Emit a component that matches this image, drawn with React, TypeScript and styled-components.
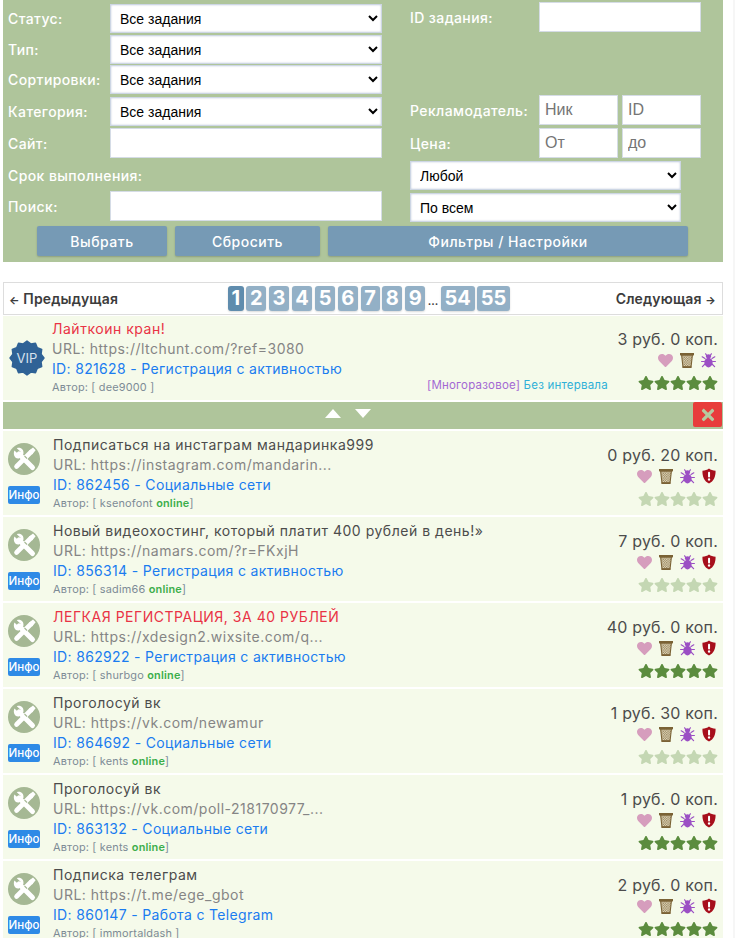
import React from "react";
import styled, { createGlobalStyle } from "styled-components";
import { FaHeart, FaStar, FaTimes } from "react-icons/fa";

const GlobalStyle = createGlobalStyle`
  html, body {
    margin: 0;
    padding: 0;
    background: #ffffff;
    font-family: Inter, "Noto Sans", sans-serif;
  }
  * {
    box-sizing: border-box;
  }
`;

type Task = {
  title: string;
  url: string;
  id: string;
  category: string;
  author: string;
  online?: boolean;
  price: string;
  accent?: boolean;
  dimStars?: boolean;
};

const tasks: Task[] = [
  {
    title: "Подписаться на инстаграм мандаринка999",
    url: "https://instagram.com/mandarin...",
    id: "862456",
    category: "Социальные сети",
    author: "ksenofont",
    online: true,
    price: "0 руб. 20 коп.",
    dimStars: true,
  },
  {
    title: "Новый видеохостинг, который платит 400 рублей в день!»",
    url: "https://namars.com/?r=FKxjH",
    id: "856314",
    category: "Регистрация с активностью",
    author: "sadim66",
    online: true,
    price: "7 руб. 0 коп.",
    dimStars: true,
  },
  {
    title: "ЛЕГКАЯ РЕГИСТРАЦИЯ, ЗА 40 РУБЛЕЙ",
    url: "https://xdesign2.wixsite.com/q...",
    id: "862922",
    category: "Регистрация с активностью",
    author: "shurbgo",
    online: true,
    price: "40 руб. 0 коп.",
    accent: true,
  },
  {
    title: "Проголосуй вк",
    url: "https://vk.com/newamur",
    id: "864692",
    category: "Социальные сети",
    author: "kents",
    online: true,
    price: "1 руб. 30 коп.",
    dimStars: true,
  },
  {
    title: "Проголосуй вк",
    url: "https://vk.com/poll-218170977_...",
    id: "863132",
    category: "Социальные сети",
    author: "kents",
    online: true,
    price: "1 руб. 0 коп.",
  },
  {
    title: "Подписка телеграм",
    url: "https://t.me/ege_gbot",
    id: "860147",
    category: "Работа с Telegram",
    author: "immortaldash",
    price: "2 руб. 0 коп.",
  },
];

const pages = ["1", "2", "3", "4", "5", "6", "7", "8", "9"];

function Basket() {
  return (
    <svg width="14" height="15" viewBox="0 0 14 15">
      <defs>
        <pattern id="mesh" width="2.4" height="2.4" patternUnits="userSpaceOnUse">
          <rect width="2.4" height="2.4" fill="#e9e3cc" />
          <rect width="1.2" height="1.2" fill="#8f7a4d" />
          <rect x="1.2" y="1.2" width="1.2" height="1.2" fill="#8f7a4d" />
        </pattern>
      </defs>
      <path d="M1.6 2 L3 14.2 H11 L12.4 2 Z" fill="url(#mesh)" stroke="#7a6235" strokeWidth="1.1" />
      <rect x="0" y="0" width="14" height="2.4" fill="#7a6235" />
      <rect x="2.6" y="13.2" width="8.8" height="1.8" fill="#7a6235" />
    </svg>
  );
}

function Bug() {
  return (
    <svg width="15" height="15" viewBox="0 0 15 15">
      <g stroke="#9b4fc4" strokeWidth="1.2" fill="none" strokeLinecap="round">
        <path d="M4 5.5 L1.2 3.8 M11 5.5 L13.8 3.8" />
        <path d="M3.4 8.5 L0.6 8.5 M11.6 8.5 L14.4 8.5" />
        <path d="M4 11 L1.4 13.6 M11 11 L13.6 13.6" />
        <path d="M5.6 2.4 L4.6 0.8 M9.4 2.4 L10.4 0.8" />
      </g>
      <ellipse cx="7.5" cy="3.4" rx="2.6" ry="2.1" fill="#9b4fc4" />
      <path d="M7.5 5 C10.6 5 11.8 7.6 11.6 9.8 C11.4 12.6 9.4 14.4 7.5 14.4 C5.6 14.4 3.6 12.6 3.4 9.8 C3.2 7.6 4.4 5 7.5 5 Z" fill="#9b4fc4" />
    </svg>
  );
}

function Shield() {
  return (
    <svg width="14" height="16" viewBox="0 0 16 17" preserveAspectRatio="none">
      <path
        d="M8 0.5 C10 2 12.5 2.6 15.5 2.8 C15.7 9 13.5 13.8 8 16.5 C2.5 13.8 0.3 9 0.5 2.8 C3.5 2.6 6 2 8 0.5 Z"
        fill="#a70f1c"
      />
      <rect x="6.9" y="4" width="2.3" height="6" rx="1" fill="#ffffff" />
      <circle cx="8.05" cy="12.2" r="1.3" fill="#ffffff" />
    </svg>
  );
}

function Tools() {
  return (
    <svg width="32" height="32" viewBox="0 0 32 32">
      <circle cx="16" cy="16" r="16" fill="#a5b894" />
      {/* spanner, lower right handle */}
      <path d="M11 11 L24.5 24.5" stroke="#ffffff" strokeWidth="5" strokeLinecap="round" />
      <path
        d="M6.4 7.6 L10.2 11 L12.6 8.8 L8.8 5.2 C12.6 3.8 16.2 6.6 15.4 11 L11 15.4 C6.6 16.2 4.8 11.6 6.4 7.6 Z"
        fill="#ffffff"
      />
      {/* screwdriver, lower left handle */}
      <path d="M23 9 L8.5 23.5" stroke="#ffffff" strokeWidth="4.6" strokeLinecap="round" />
      <path d="M21 7.8 L25 4.6 L27.6 7.2 L24.4 11.2 L21.6 11 Z" fill="#ffffff" />
      <path d="M16.5 13 L19 15.5" stroke="#a5b894" strokeWidth="1.1" />
    </svg>
  );
}

function VipBadge() {
  const points = Array.from({ length: 24 }, (_, i) => {
    const r = i % 2 === 0 ? 17 : 14.6;
    const a = (i * Math.PI) / 12;
    return `${18 + r * Math.cos(a)},${18 + r * Math.sin(a)}`;
  }).join(" ");
  return (
    <BadgeWrap>
      <svg width="36" height="36" viewBox="0 0 36 36">
        <polygon points={points} fill="#2f6296" stroke="#2f6296" strokeWidth="1.4" strokeLinejoin="round" />
      </svg>
      <BadgeText>VIP</BadgeText>
    </BadgeWrap>
  );
}

function Rating({ dim }: { dim?: boolean }) {
  return (
    <Stars $dim={dim}>
      {[0, 1, 2, 3, 4].map((i) => (
        <FaStar key={i} size={16} />
      ))}
    </Stars>
  );
}

function Price({ value, withShield }: { value: string; withShield: boolean }) {
  return (
    <PriceCol>
      <PriceText>{value}</PriceText>
      <Icons>
        <FaHeart size={15} color="#d69dbd" />
        <Basket />
        <Bug />
        {withShield && <Shield />}
      </Icons>
    </PriceCol>
  );
}

export default function App() {
  return (
    <>
      <GlobalStyle />
      <Page>
        <Filters>
          <FilterColumns>
            <LeftCol>
              <FieldRow $h={29} $mt={4}>
                <Label>Статус:</Label>
                <WideSelect><option>Все задания</option></WideSelect>
              </FieldRow>
              <FieldRow $h={29} $mt={2}>
                <Label>Тип:</Label>
                <WideSelect><option>Все задания</option></WideSelect>
              </FieldRow>
              <FieldRow $h={29} $mt={1}>
                <Label>Сортировки:</Label>
                <WideSelect><option>Все задания</option></WideSelect>
              </FieldRow>
              <FieldRow $h={29} $mt={3}>
                <Label>Категория:</Label>
                <WideSelect><option>Все задания</option></WideSelect>
              </FieldRow>
              <FieldRow $h={30} $mt={2}>
                <Label>Сайт:</Label>
                <WideInput />
              </FieldRow>
              <FieldRow $h={30} $mt={2}>
                <Label>Срок выполнения:</Label>
              </FieldRow>
              <FieldRow $h={30} $mt={1}>
                <Label>Поиск:</Label>
                <WideInput />
              </FieldRow>
            </LeftCol>
            <RightCol>
              <FieldRow $h={30} $mt={2}>
                <RightLabel>ID задания:</RightLabel>
                <IdInput />
              </FieldRow>
              <FieldRow $h={30} $mt={63}>
                <RightLabel>Рекламодатель:</RightLabel>
                <PairInputs>
                  <HalfInput placeholder="Ник" />
                  <HalfInput placeholder="ID" />
                </PairInputs>
              </FieldRow>
              <FieldRow $h={30} $mt={3}>
                <RightLabel>Цена:</RightLabel>
                <PairInputs>
                  <HalfInput placeholder="От" />
                  <HalfInput placeholder="до" />
                </PairInputs>
              </FieldRow>
              <RightSelect $mt={3}><option>Любой</option></RightSelect>
              <RightSelect $mt={3}><option>По всем</option></RightSelect>
            </RightCol>
          </FilterColumns>
          <ButtonRow>
            <ActionButton $w={130}>Выбрать</ActionButton>
            <ActionButton $w={145}>Сбросить</ActionButton>
            <ActionButton $w={360}>Фильтры / Настройки</ActionButton>
          </ButtonRow>
        </Filters>

        <Pager>
          <PagerLink>
            <b>←</b> Предыдущая
          </PagerLink>
          <PageList>
            {pages.map((p, i) => (
              <PageBtn key={p} $active={i === 0}>{p}</PageBtn>
            ))}
            <Dots>...</Dots>
            <PageBtn>54</PageBtn>
            <PageBtn>55</PageBtn>
          </PageList>
          <PagerLink>
            Следующая <b>→</b>
          </PagerLink>
        </Pager>

        <VipRow>
          <VipLeft>
            <VipBadge />
          </VipLeft>
          <Body $top={3}>
            <Title $accent>Лайткоин кран!</Title>
            <Url>URL: https://ltchunt.com/?ref=3080</Url>
            <IdLine>ID: 821628 - Регистрация с активностью</IdLine>
            <Author>Автор: [ dee9000 ]</Author>
          </Body>
          <VipTags>
            <Reuse>[Многоразовое]</Reuse> <NoGap>Без интервала</NoGap>
          </VipTags>
          <RightBlock $top={13}>
            <Price value="3 руб. 0 коп." withShield={false} />
            <Rating />
          </RightBlock>
        </VipRow>

        <SortBar>
          <Arrows>
            <ArrowUp />
            <ArrowDown />
          </Arrows>
          <CloseBtn>
            <FaTimes size={18} color="#b5c9a0" />
          </CloseBtn>
        </SortBar>

        <TaskList>
          {tasks.map((t) => (
            <TaskRow key={t.id}>
              <ToolCol>
                <Tools />
                <InfoBtn>Инфо</InfoBtn>
              </ToolCol>
              <Body $top={4}>
                <Title $accent={t.accent}>{t.title}</Title>
                <Url>URL: {t.url}</Url>
                <IdLine>
                  ID: {t.id} - {t.category}
                </IdLine>
                <Author>
                  Автор: [ {t.author}
                  {t.online ? (
                    <>
                      {" "}
                      <Online>online</Online>]
                    </>
                  ) : (
                    " ]"
                  )}
                </Author>
              </Body>
              <RightBlock $top={14}>
                <Price value={t.price} withShield />
                <Rating dim={t.dimStars} />
              </RightBlock>
            </TaskRow>
          ))}
        </TaskList>
      </Page>
    </>
  );
}

const Page = styled.div`
  width: 735px;
  height: 938px;
  overflow: hidden;
  padding: 0 10px 0 3px;
  border-right: 2px solid #f6f6f6;
`;

const Filters = styled.div`
  height: 262px;
  background: #afc59b;
  padding-left: 5px;
`;

const FilterColumns = styled.div`
  display: flex;
  height: 226px;
`;

const LeftCol = styled.div`
  width: 402px;
`;

const RightCol = styled.div`
  width: 291px;
`;

const FieldRow = styled.div<{ $h: number; $mt: number }>`
  display: flex;
  align-items: center;
  height: ${(p) => p.$h}px;
  margin-top: ${(p) => p.$mt}px;
`;

const Label = styled.label`
  width: 102px;
  flex: none;
  white-space: nowrap;
  color: #ffffff;
  font-size: 14px;
  font-weight: 500;
  letter-spacing: 0.4px;
`;

const RightLabel = styled(Label)`
  width: 129px;
  padding-top: 1px;
`;

const selectBase = `
  height: 29px;
  background: #ffffff;
  border: 1px solid #cdd6e4;
  border-radius: 0;
  box-shadow: inset 0 0 2px #b9c4da;
  font-family: "Liberation Sans", Arial, sans-serif;
  font-size: 14px;
  color: #000000;
  padding: 0 5px;
`;

const WideSelect = styled.select`
  ${selectBase}
  width: 272px;
`;

const RightSelect = styled.select<{ $mt: number }>`
  ${selectBase}
  display: block;
  width: 271px;
  margin-top: ${(p) => p.$mt}px;
`;

const inputBase = `
  height: 30px;
  background: #ffffff;
  border: 1px solid #d5dce6;
  font-family: "Liberation Sans", Arial, sans-serif;
  font-size: 16px;
  padding: 0 5px;
  outline: none;
  &::placeholder {
    color: #757575;
  }
`;

const WideInput = styled.input`
  ${inputBase}
  width: 272px;
`;

const IdInput = styled.input`
  ${inputBase}
  width: 162px;
`;

const PairInputs = styled.div`
  display: flex;
  gap: 4px;
`;

const HalfInput = styled.input`
  ${inputBase}
  width: 79px;
`;

const ButtonRow = styled.div`
  display: flex;
  gap: 8px;
  padding-left: 29px;
`;

const ActionButton = styled.button<{ $w: number }>`
  width: ${(p) => p.$w}px;
  height: 30px;
  background: #769ab5;
  border: none;
  border-radius: 2px;
  box-shadow: 0 1px 2px rgba(0, 0, 0, 0.2);
  color: #ffffff;
  font-family: Inter, sans-serif;
  font-size: 14px;
  font-weight: 500;
  letter-spacing: 0.5px;
  padding: 0;
`;

const Pager = styled.div`
  display: flex;
  align-items: center;
  justify-content: space-between;
  height: 33px;
  margin-top: 20px;
  padding: 0 6px 0 5px;
  border: 1px solid #dddddd;
  background: #ffffff;
`;

const PagerLink = styled.span`
  color: #3c3c3c;
  font-size: 14px;
  font-weight: 600;
  letter-spacing: 0.15px;
  b {
    font-size: 11px;
    font-weight: 700;
  }
`;

const PageList = styled.div`
  display: flex;
  align-items: center;
  gap: 2.5px;
  margin-left: 4px;
`;

const PageBtn = styled.span<{ $active?: boolean }>`
  display: block;
  height: 25px;
  padding: 0 3.7px;
  background: ${(p) => (p.$active ? "#5f8cad" : "#93b0c6")};
  border-radius: 3px;
  box-shadow: 0 1px 2px rgba(0, 0, 0, 0.15);
  color: #ffffff;
  font-size: 20px;
  font-weight: 700;
  line-height: 25px;
  text-align: center;
`;

const Dots = styled.span`
  color: #3c3c3c;
  font-size: 11px;
  font-weight: 600;
  align-self: flex-end;
  margin-bottom: 3px;
`;

const VipRow = styled.div`
  display: flex;
  height: 84px;
  margin-top: 1px;
  background: #f5faea;
  position: relative;
`;

const VipLeft = styled.div`
  width: 49px;
  flex: none;
  display: flex;
  align-items: center;
  padding-left: 6px;
`;

const BadgeWrap = styled.div`
  position: relative;
  width: 36px;
  height: 36px;
`;

const BadgeText = styled.span`
  position: absolute;
  inset: 0;
  text-align: center;
  line-height: 36px;
  color: #d7e3ee;
  font-size: 13px;
`;

const Body = styled.div<{ $top: number }>`
  flex: 1;
  min-width: 0;
  padding-top: ${(p) => p.$top}px;
`;

const Title = styled.div<{ $accent?: boolean }>`
  height: 19px;
  line-height: 19px;
  white-space: nowrap;
  color: ${(p) => (p.$accent ? "#e93345" : "#4c4c4c")};
  font-size: 14px;
  letter-spacing: 0.52px;
`;

const Url = styled.div`
  height: 20px;
  line-height: 20px;
  margin-top: 1px;
  color: #858585;
  font-size: 14px;
  letter-spacing: 0.5px;
`;

const IdLine = styled.div`
  height: 20px;
  line-height: 20px;
  color: #1a7cf0;
  font-size: 14px;
  letter-spacing: 0.33px;
`;

const Author = styled.div`
  height: 16px;
  line-height: 16px;
  color: #7d8b96;
  font-size: 10.9px;
  letter-spacing: 0.2px;
`;

const Online = styled.b`
  color: #3cae4a;
  font-weight: 600;
`;

const VipTags = styled.div`
  position: absolute;
  left: 424px;
  bottom: 8px;
  font-size: 11.5px;
  letter-spacing: 0.2px;
`;

const Reuse = styled.span`
  color: #a368d3;
`;

const NoGap = styled.span`
  color: #2fb0d8;
`;

const RightBlock = styled.div<{ $top: number }>`
  width: 130px;
  flex: none;
  padding: ${(p) => p.$top}px 5px 0 0;
  display: flex;
  flex-direction: column;
  align-items: flex-end;
`;

const PriceCol = styled.div`
  display: flex;
  flex-direction: column;
  align-items: flex-end;
`;

const PriceText = styled.div`
  color: #4c4c4c;
  font-size: 16px;
  line-height: 20px;
  white-space: nowrap;
  letter-spacing: 0.2px;
`;

const Icons = styled.div`
  display: flex;
  align-items: center;
  gap: 7px;
  height: 18px;
  margin-top: 2px;
  padding-right: 2px;
`;

const Stars = styled.div<{ $dim?: boolean }>`
  display: flex;
  color: ${(p) => (p.$dim ? "#c4d7b3" : "#5b8c3e")};
  margin-top: 6px;
`;

const SortBar = styled.div`
  display: flex;
  align-items: flex-start;
  height: 27px;
  margin-top: 2px;
  background: #afc59b;
  position: relative;
`;

const Arrows = styled.div`
  display: flex;
  align-items: center;
  gap: 14px;
  margin: 7px 0 0 322px;
`;

const ArrowUp = styled.span`
  width: 0;
  height: 0;
  border-left: 8px solid transparent;
  border-right: 8px solid transparent;
  border-bottom: 9px solid #ffffff;
`;

const ArrowDown = styled(ArrowUp)`
  border-bottom: none;
  border-top: 9px solid #ffffff;
`;

const CloseBtn = styled.span`
  position: absolute;
  right: 1px;
  top: 0;
  width: 29px;
  height: 25px;
  background: #e83c3c;
  border-radius: 2px;
  display: flex;
  align-items: center;
  justify-content: center;
`;

const TaskList = styled.div`
  display: flex;
  flex-direction: column;
  gap: 2px;
  margin-top: 2px;
`;

const TaskRow = styled.div`
  display: flex;
  height: 84px;
  background: #f5faea;
`;

const ToolCol = styled.div`
  width: 50px;
  flex: none;
  padding: 12px 0 0 5px;
  display: flex;
  flex-direction: column;
  gap: 11px;
`;

const InfoBtn = styled.span`
  width: 32px;
  height: 18px;
  background: #2e8ae6;
  border-radius: 2px;
  color: #ffffff;
  font-size: 11.5px;
  font-weight: 500;
  line-height: 18px;
  text-align: center;
`;
